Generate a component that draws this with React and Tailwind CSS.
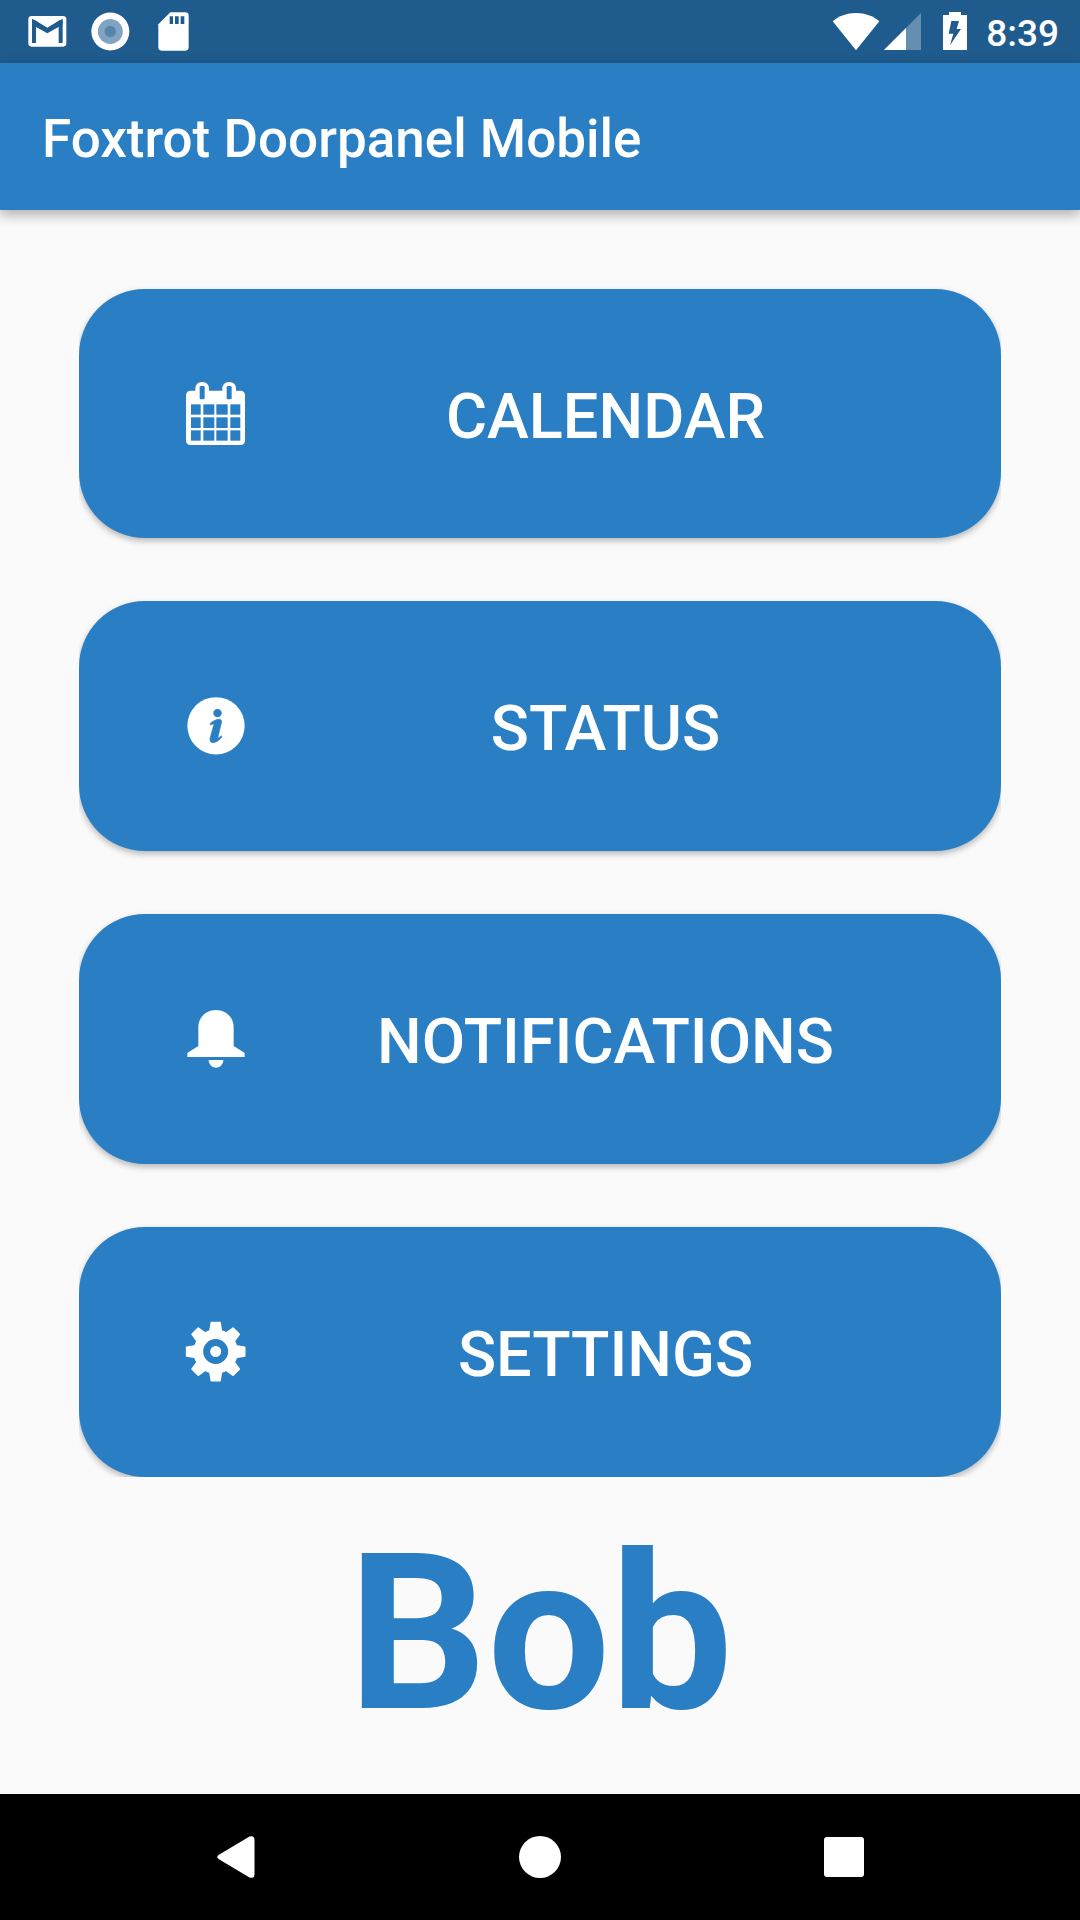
const CalendarIcon = () => (
  <svg className="size-[90px] shrink-0" viewBox="0 -3 270 270" fill="none">
    <rect x="48" y="62" width="177" height="163" rx="13" fill="#fff" />
    <rect x="76" y="36" width="41" height="64" rx="19" fill="#fff" />
    <rect x="157" y="36" width="41" height="64" rx="19" fill="#fff" />
    <g fill="#2a7ec4">
      <rect x="89" y="48" width="15" height="40" rx="4" />
      <rect x="170" y="48" width="15" height="40" rx="4" />
      {[[103, 31], [142, 32], [181, 31]].map(([y, h]) =>
        [[63, 29], [100, 33], [139, 34], [181, 30]].map(([x, w]) => (
          <rect key={`${x}-${y}`} x={x} y={y} width={w} height={h} />
        ))
      )}
    </g>
  </svg>
);

const InfoIcon = () => (
  <svg className="size-[90px] shrink-0" viewBox="0 3 270 270" fill="none">
    <circle cx="138" cy="137.500" r="86" fill="#fff" />
    <circle cx="142.500" cy="99.500" r="12.500" fill="#2a7ec4" />
    <path d="M121 130C128 123 139 118 147 118C154 118 156 122 154 129L144 170C143 175 145 175 154 167Q157 170 154 173C146 182 136 188 128 188C120 188 119 182 121 172L131 136C132 131 129 131 121 135Z" fill="#2a7ec4" stroke="#2a7ec4" strokeWidth="2" />
  </svg>
);

const BellIcon = () => (
  <svg className="size-[90px] shrink-0" viewBox="0 -3 270 270" fill="#fff">
    <path d="M85 97C85 66 109 45 138 45C167 45 191 66 191 97V153L224 174V186H52V174L85 153Z" />
    <path d="M116 195H160C160 208 150 218 138 218C126 218 116 208 116 195Z" />
  </svg>
);

const GearIcon = () => (
  <svg className="size-[90px] shrink-0" viewBox="0 6 270 270" fill="none">
    <g fill="#fff" stroke="#fff" strokeWidth="5" strokeLinejoin="round">
      <circle cx="137" cy="140" r="64" />
      {[0, 45, 90, 135, 180, 225, 270, 315].map((angle) => (
        <path key={angle} d="M119 84L124 53H150L155 84Z" transform={`rotate(${angle} 137 140)`} />
      ))}
    </g>
    <circle cx="137" cy="139.500" r="27" stroke="#2a7ec4" strokeWidth="21" />
  </svg>
);

const items = [
  { label: "CALENDAR", Icon: CalendarIcon, height: "h-[249px]" },
  { label: "STATUS", Icon: InfoIcon, height: "h-[250px]" },
  { label: "NOTIFICATIONS", Icon: BellIcon, height: "h-[250px]" },
  { label: "SETTINGS", Icon: GearIcon, height: "h-[250px]" },
];

function StatusBar() {
  return (
    <header className="flex h-[63px] items-start justify-between bg-[#1f5b8d]">
      <div className="flex">
        <svg className="ml-[26px] h-[63px] w-[42px]" viewBox="78 0 126 189" fill="none">
          <rect x="85" y="48" width="114" height="92" rx="10" fill="#fff" />
          <path d="M102 129V67L142 91L182 67V129" stroke="#1f5b8d" strokeWidth="12" />
          <path d="M96 62L103 59L142 84L181 59L188 62V74L142 100L96 74Z" fill="#1f5b8d" />
        </svg>
        <svg className="ml-[22px] h-[63px] w-10" viewBox="270 0 120 189">
          <circle cx="331" cy="94.500" r="57" fill="#fff" />
          <circle cx="331" cy="94.500" r="37.500" fill="#82a4c1" />
          <circle cx="331" cy="94.500" r="17" fill="#5684aa" />
        </svg>
        <svg className="ml-[26px] h-[63px] w-9" viewBox="468 0 108 189">
          <path d="M511 37H556Q566 37 566 47V142Q566 152 556 152H485Q475 152 475 142V73Z" fill="#fff" />
          <path d="M509 49H519V72H509ZM525 49H536V72H525ZM542 49H553V72H542Z" fill="#1f5b8d" />
        </svg>
      </div>
      <div className="flex">
        <svg className="h-[63px] w-[50px]" viewBox="60 0 150 189">
          <path d="M68 64C86 48 111 39 138 39C165 39 190 48 208 64L138 151Z" fill="#fff" />
        </svg>
        <svg className="h-[63px] w-[44px]" viewBox="210 0 132 189">
          <path d="M333 39V150H222Z" fill="#658eb0" />
          <path d="M288 84V150H222Z" fill="#fff" />
        </svg>
        <svg className="ml-4 h-[63px] w-[30px]" viewBox="390 0 90 189">
          <path d="M399 45H417V36H453V45H471V150H399Z" fill="#fff" />
          <path d="M424 63H447L440 87H453L420 136L430 101H416Z" fill="#1f5b8d" />
        </svg>
        <span className="mr-[21px] ml-[16px] text-[37px] leading-[67px] font-medium text-white">8:39</span>
      </div>
    </header>
  );
}

export default function App() {
  return (
    <div className="flex h-[1920px] w-[1080px] flex-col overflow-hidden bg-[#fafafa] font-['Roboto',sans-serif]">
      <StatusBar />
      <div className="relative z-10 flex h-[147px] items-center bg-[#2a7ec4] pl-[42px] shadow-[0_5px_12px_rgba(0,0,0,0.3)]">
        <h1 className="pt-[6px] text-[53px] leading-none font-medium text-white">Foxtrot Doorpanel Mobile</h1>
      </div>
      <main className="flex flex-1 flex-col">
        <nav className="mx-[79px] flex flex-col gap-[63px] overflow-hidden pt-[79px]">
          {items.map(({ label, Icon, height }) => (
            <button
              key={label}
              className={`${height} flex shrink-0 items-center rounded-[66px] bg-[#2a7ec4] pr-[79px] pl-[91px] text-white shadow-[0_3px_6px_rgba(0,0,0,0.27)]`}
            >
              <Icon />
              <span className="flex-1 pt-[5px] pl-[29px] text-center text-[63px] leading-none font-medium">{label}</span>
            </button>
          ))}
        </nav>
        <div className="flex flex-1 items-center justify-center pb-[4px] pl-px text-[218px] leading-none font-bold text-[#2a7ec4]">Bob</div>
      </main>
      <footer className="flex h-[126px] items-center bg-black">
        <svg className="ml-[216px] h-[44px] w-10" viewBox="0 0 40 44" fill="#fff">
          <path d="M2.500 20L33.500 1.500Q38.500 0 38.500 5V39Q38.500 44 33.500 42.500L2.500 24Q0 22 2.500 20Z" />
        </svg>
        <div className="ml-[263px] size-[42px] rounded-full bg-white" />
        <div className="ml-[263px] h-10 w-[40px] rounded-[3px] bg-white" />
      </footer>
    </div>
  );
}
